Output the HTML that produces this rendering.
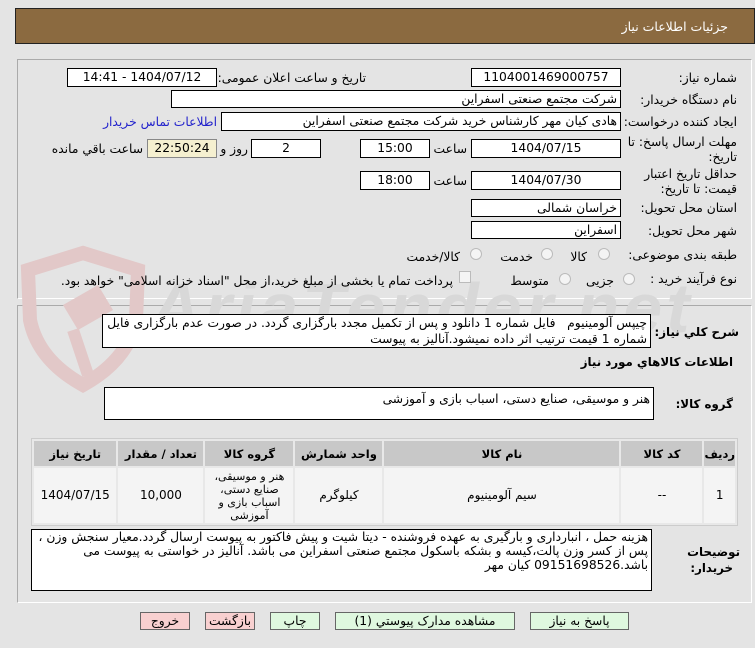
<!DOCTYPE html>
<html><head><meta charset="utf-8"><style>
*{margin:0;padding:0;box-sizing:border-box}
body{width:755px;height:648px;background:#e4e4e4;font-family:"DejaVu Sans","Liberation Sans",sans-serif;font-size:12.3px;color:#000;position:relative;overflow:hidden}
.a{position:absolute}
.hdr{left:15px;top:8px;width:740px;height:36px;background:#8b6a40;border:1px solid #222}
.hdr span{position:absolute;right:26px;top:10px;color:#fff;font-size:12.5px}
.panel{border:1px solid #aaa;border-right-color:#fff;border-bottom-color:#fff}
.box{position:absolute;background:#fff;border:1px solid #000;direction:rtl;text-align:right;padding:0 3px;white-space:nowrap;line-height:17px}
.c{text-align:center}
.l{position:absolute;direction:rtl;text-align:right;white-space:nowrap}
.b{font-weight:bold;font-size:11.8px}
.rd{position:absolute;width:12px;height:12px;border-radius:50%;border:1px solid #bbb;background:#f4f4f4}
.ta{position:absolute;background:#fff;border:1px solid #000;direction:rtl;text-align:right;padding:2px 3px;line-height:19px}
table{border-collapse:separate;border-spacing:2px;position:absolute;left:31px;top:438px;width:707px;background:#e8e8e8;border:1px solid #ccc}
th{background:#c8c8c8;height:25px;font-weight:bold;font-size:11.5px}
td{background:#f4f4f4;text-align:center;font-size:12px;line-height:19px}
.btn{position:absolute;top:612px;height:18px;border:1px solid #666;text-align:center;line-height:16px;direction:rtl}
</style></head><body>
<div class="a hdr"><span>جزئیات اطلاعات نیاز</span></div>
<div class="a panel" style="left:17px;top:59px;width:735px;height:240px"></div>
<div class="a panel" style="left:17px;top:305px;width:735px;height:298px"></div>

<svg class="a" style="left:18px;top:245px" width="130" height="150" viewBox="0 0 130 150"><path d="M65 8 L120 25 L118 75 Q110 115 65 140 Q20 115 12 75 L10 25 Z" fill="none" stroke="#e2c8c8" stroke-width="14"/><path d="M45 60 L80 40 L95 65 L60 85 Z" fill="#e2c8c8"/><path d="M55 85 L70 130" stroke="#e2c8c8" stroke-width="12"/></svg>
<div class="a" style="left:150px;top:268px;font-size:70px;font-weight:bold;color:#d8d8d8;font-family:'Liberation Sans',sans-serif;letter-spacing:4px;font-style:italic">AriaTender.net</div>

<div class="l" style="right:18px;top:71px">شماره نیاز:</div>
<div class="box c" style="left:471px;top:68px;width:150px;height:19px">1104001469000757</div>
<div class="l" style="right:389px;top:71px">تاریخ و ساعت اعلان عمومی:</div>
<div class="box c" style="left:67px;top:68px;width:150px;height:19px">1404/07/12 - 14:41</div>

<div class="l" style="right:18px;top:93px">نام دستگاه خریدار:</div>
<div class="box" style="left:171px;top:90px;width:450px;height:18px">شرکت مجتمع صنعتی اسفراین</div>

<div class="l" style="right:18px;top:115px">ایجاد کننده درخواست:</div>
<div class="box" style="left:221px;top:112px;width:400px;height:19px">هادی کیان مهر کارشناس خرید شرکت مجتمع صنعتی اسفراین</div>
<div class="l" style="right:538px;top:115px;color:#2222cc">اطلاعات تماس خریدار</div>

<div class="l" style="right:18px;top:135px">مهلت ارسال پاسخ: تا</div>
<div class="l" style="right:18px;top:150px">تاریخ:</div>
<div class="box c" style="left:471px;top:139px;width:150px;height:19px">1404/07/15</div>
<div class="l" style="right:288px;top:142px">ساعت</div>
<div class="box c" style="left:360px;top:139px;width:70px;height:19px">15:00</div>
<div class="box c" style="left:251px;top:139px;width:70px;height:19px">2</div>
<div class="l" style="right:507px;top:142px">روز و</div>
<div class="box c" style="left:147px;top:139px;width:70px;height:19px;background:#f5f0d0;border-color:#888">22:50:24</div>
<div class="l" style="right:612px;top:142px">ساعت باقي مانده</div>

<div class="l" style="right:18px;top:167px">حداقل تاریخ اعتبار</div>
<div class="l" style="right:18px;top:182px">قیمت: تا تاریخ:</div>
<div class="box c" style="left:471px;top:171px;width:150px;height:19px">1404/07/30</div>
<div class="l" style="right:288px;top:174px">ساعت</div>
<div class="box c" style="left:360px;top:171px;width:70px;height:19px">18:00</div>

<div class="l" style="right:18px;top:201px">استان محل تحویل:</div>
<div class="box" style="left:471px;top:199px;width:150px;height:18px">خراسان شمالی</div>
<div class="l" style="right:18px;top:224px">شهر محل تحویل:</div>
<div class="box" style="left:471px;top:221px;width:150px;height:18px">اسفراین</div>

<div class="l" style="right:18px;top:248px">طبقه بندی موضوعی:</div>
<div class="rd" style="left:598px;top:248px"></div><div class="l" style="right:168px;top:250px">کالا</div>
<div class="rd" style="left:541px;top:248px"></div><div class="l" style="right:222px;top:250px">خدمت</div>
<div class="rd" style="left:470px;top:248px"></div><div class="l" style="right:295px;top:250px">کالا/خدمت</div>

<div class="l" style="right:18px;top:272px">نوع فرآیند خرید :</div>
<div class="rd" style="left:623px;top:273px"></div><div class="l" style="right:141px;top:274px">جزیی</div>
<div class="rd" style="left:559px;top:273px"></div><div class="l" style="right:206px;top:274px">متوسط</div>
<div class="a" style="left:459px;top:271px;width:12px;height:12px;border:1px solid #bbb;background:#f4f4f4"></div>
<div class="l" style="right:302px;top:274px">پرداخت تمام یا بخشی از مبلغ خرید،از محل "اسناد خزانه اسلامی" خواهد بود.</div>

<div class="l b" style="right:16px;top:325px">شرح کلي نياز:</div>
<div class="ta" style="left:102px;top:314px;width:549px;height:34px;padding:0 3px;line-height:16px;white-space:normal">چیپس آلومینیوم &nbsp; فایل شماره 1 دانلود و پس از تکمیل مجدد بارگزاری گردد. در صورت عدم بارگزاری فایل شماره 1 قیمت ترتیب اثر داده نمیشود.آنالیز به پیوست</div>
<div class="l b" style="right:22px;top:355px">اطلاعات کالاهاي مورد نياز</div>
<div class="l b" style="right:22px;top:397px">گروه کالا:</div>
<div class="ta" style="left:104px;top:387px;width:550px;height:33px">هنر و موسیقی، صنایع دستی، اسباب بازی و آموزشی</div>

<table dir="rtl">
<tr><th style="width:28px">ردیف</th><th style="width:81px">کد کالا</th><th style="width:235px">نام کالا</th><th style="width:87px">واحد شمارش</th><th style="width:88px">گروه کالا</th><th style="width:85px">تعداد / مقدار</th><th>تاریخ نیاز</th></tr>
<tr style="height:55px"><td>1</td><td>--</td><td>سیم آلومینیوم</td><td>کیلوگرم</td><td style="line-height:13px;font-size:11px">هنر و موسیقی، صنایع دستی، اسباب بازی و آموزشی</td><td>10,000</td><td>1404/07/15</td></tr>
</table>

<div class="l b" style="right:15px;top:545px">توضیحات</div>
<div class="l b" style="right:22px;top:561px">خریدار:</div>
<div class="ta" style="left:31px;top:529px;width:621px;height:62px;padding:0 3px;line-height:14px;white-space:normal">هزینه حمل ، انبارداری و بارگیری به عهده فروشنده - دیتا شیت و پیش فاکتور به پیوست ارسال گردد.معیار سنجش وزن ، پس از کسر وزن پالت،کیسه و بشکه باسکول مجتمع صنعتی اسفراین می باشد. آنالیز در خواستی به پیوست می باشد.09151698526 کیان مهر</div>

<div class="btn" style="left:140px;width:50px;background:#f8d0d0">خروج</div>
<div class="btn" style="left:205px;width:50px;background:#f8d0d0">بازگشت</div>
<div class="btn" style="left:270px;width:50px;background:#dff8df">چاپ</div>
<div class="btn" style="left:335px;width:180px;background:#dff8df">مشاهده مدارک پیوستي (1)</div>
<div class="btn" style="left:530px;width:99px;background:#dff8df">پاسخ به نياز</div>
</body></html>
